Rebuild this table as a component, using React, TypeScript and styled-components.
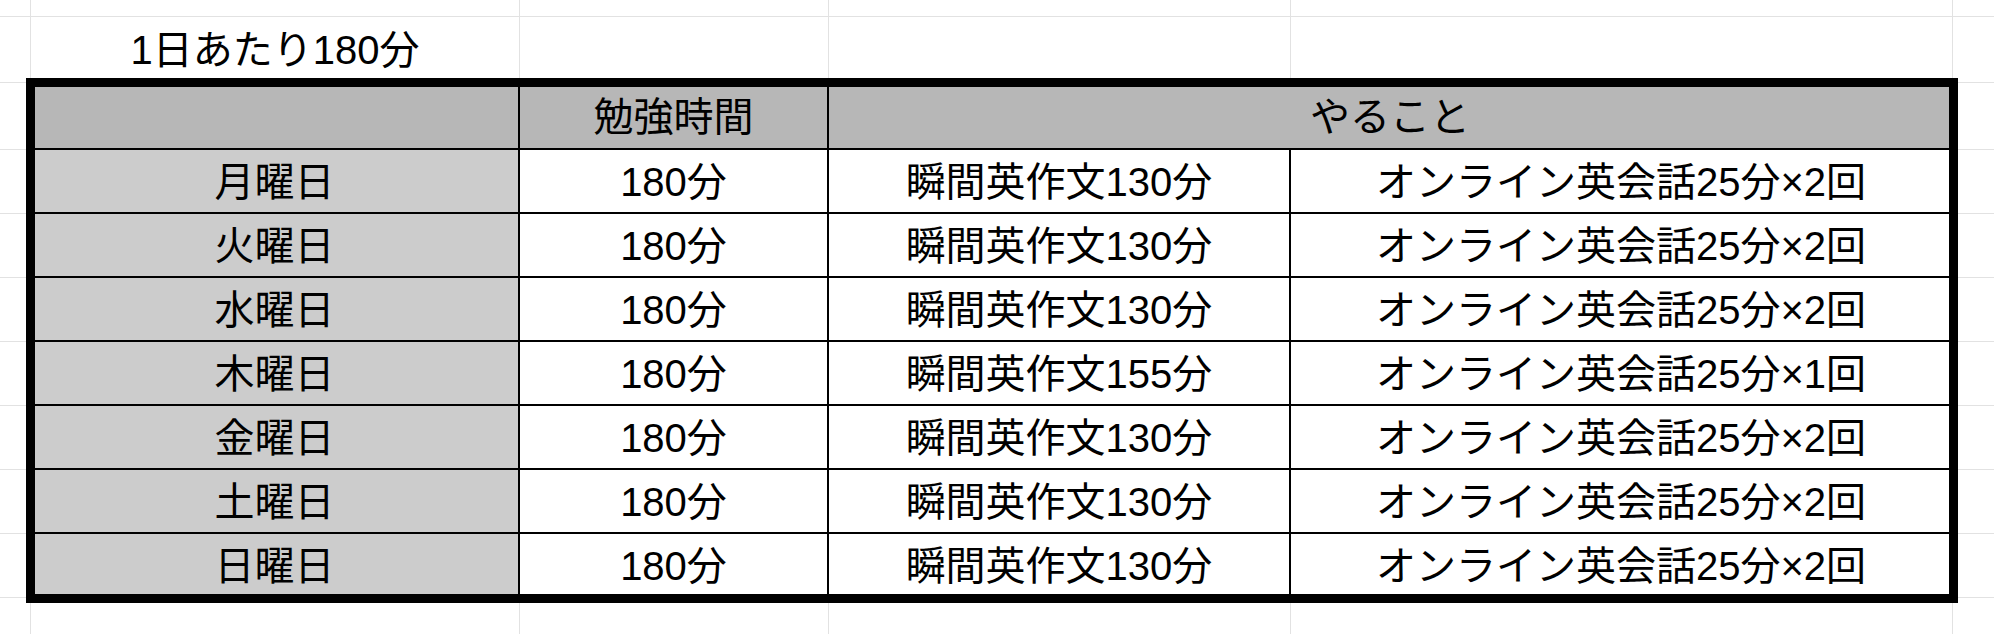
import React from "react";
import styled, { createGlobalStyle } from "styled-components";

const GlobalStyle = createGlobalStyle`
  html, body {
    margin: 0;
    padding: 0;
    background: #ffffff;
  }
  body {
    font-family: "Liberation Sans", "Noto Sans CJK JP", sans-serif;
    color: #000000;
  }
`;

type DayRow = {
  day: string;
  total: string;
  writing: string;
  talk: string;
};

const days: DayRow[] = [
  { day: "月曜日", total: "180分", writing: "瞬間英作文130分", talk: "オンライン英会話25分×2回" },
  { day: "火曜日", total: "180分", writing: "瞬間英作文130分", talk: "オンライン英会話25分×2回" },
  { day: "水曜日", total: "180分", writing: "瞬間英作文130分", talk: "オンライン英会話25分×2回" },
  { day: "木曜日", total: "180分", writing: "瞬間英作文155分", talk: "オンライン英会話25分×1回" },
  { day: "金曜日", total: "180分", writing: "瞬間英作文130分", talk: "オンライン英会話25分×2回" },
  { day: "土曜日", total: "180分", writing: "瞬間英作文130分", talk: "オンライン英会話25分×2回" },
  { day: "日曜日", total: "180分", writing: "瞬間英作文130分", talk: "オンライン英会話25分×2回" },
];

const COLS = 6;
const ROWS = 11;

// sheet cells that sit around the table (table covers rows 3-10, cols 2-5)
function isTableArea(r: number, c: number) {
  return r >= 2 && r <= 9 && c >= 1 && c <= 4;
}

export default function App() {
  const cells: React.ReactNode[] = [];
  for (let r = 0; r < ROWS; r++) {
    for (let c = 0; c < COLS; c++) {
      if (isTableArea(r, c)) continue;
      const key = `${r}-${c}`;
      if (r === 1 && c === 1) {
        cells.push(
          <GridCell key={key} $lastCol={false} $lastRow={false}>
            1日あたり180分
          </GridCell>
        );
      } else {
        cells.push(<GridCell key={key} $lastCol={c === COLS - 1} $lastRow={r === ROWS - 1} />);
      }
    }
  }

  return (
    <>
      <GlobalStyle />
      <Sheet>
        <ScheduleTable>
          <TableCell $tone="header" />
          <TableCell $tone="header">勉強時間</TableCell>
          <TableCell $tone="header" $span={2}>
            やること
          </TableCell>
          {days.map((d) => (
            <React.Fragment key={d.day}>
              <TableCell $tone="day">{d.day}</TableCell>
              <TableCell $tone="plain">{d.total}</TableCell>
              <TableCell $tone="plain">{d.writing}</TableCell>
              <TableCell $tone="plain">{d.talk}</TableCell>
            </React.Fragment>
          ))}
        </ScheduleTable>
        {cells}
      </Sheet>
    </>
  );
}

const Sheet = styled.div`
  display: grid;
  width: 1994px;
  height: 634px;
  grid-template-columns: 31px 489px 309px 462px 662px 41px;
  grid-template-rows: 17px 66px 67px repeat(7, 64px) 36px;
  overflow: hidden;
  font-size: 40px;
`;

const GridCell = styled.div<{ $lastCol?: boolean; $lastRow?: boolean }>`
  box-sizing: border-box;
  display: flex;
  align-items: center;
  justify-content: center;
  white-space: nowrap;
  border-right: ${(p) => (p.$lastCol ? "none" : "1px solid #e2e2e2")};
  border-bottom: ${(p) => (p.$lastRow ? "none" : "1px solid #e2e2e2")};
  line-height: 1;
`;

const ScheduleTable = styled.div`
  grid-column: 2 / 6;
  grid-row: 3 / 11;
  display: grid;
  grid-template-columns: 489px 309px 462px 662px;
  grid-template-rows: 67px repeat(7, 64px);
  outline: 9px solid #000000;
  outline-offset: -4px;
  position: relative;
  z-index: 1;
`;

const toneColors = {
  header: "#b7b7b7",
  day: "#cccccc",
  plain: "#ffffff",
};

const TableCell = styled.div<{ $tone: keyof typeof toneColors; $span?: number }>`
  box-sizing: border-box;
  grid-column: span ${(p) => p.$span ?? 1};
  display: flex;
  align-items: center;
  justify-content: center;
  white-space: nowrap;
  background: ${(p) => toneColors[p.$tone]};
  border-right: 2px solid #000000;
  border-bottom: 2px solid #000000;
  line-height: 1;
  padding-top: 2px;
`;
